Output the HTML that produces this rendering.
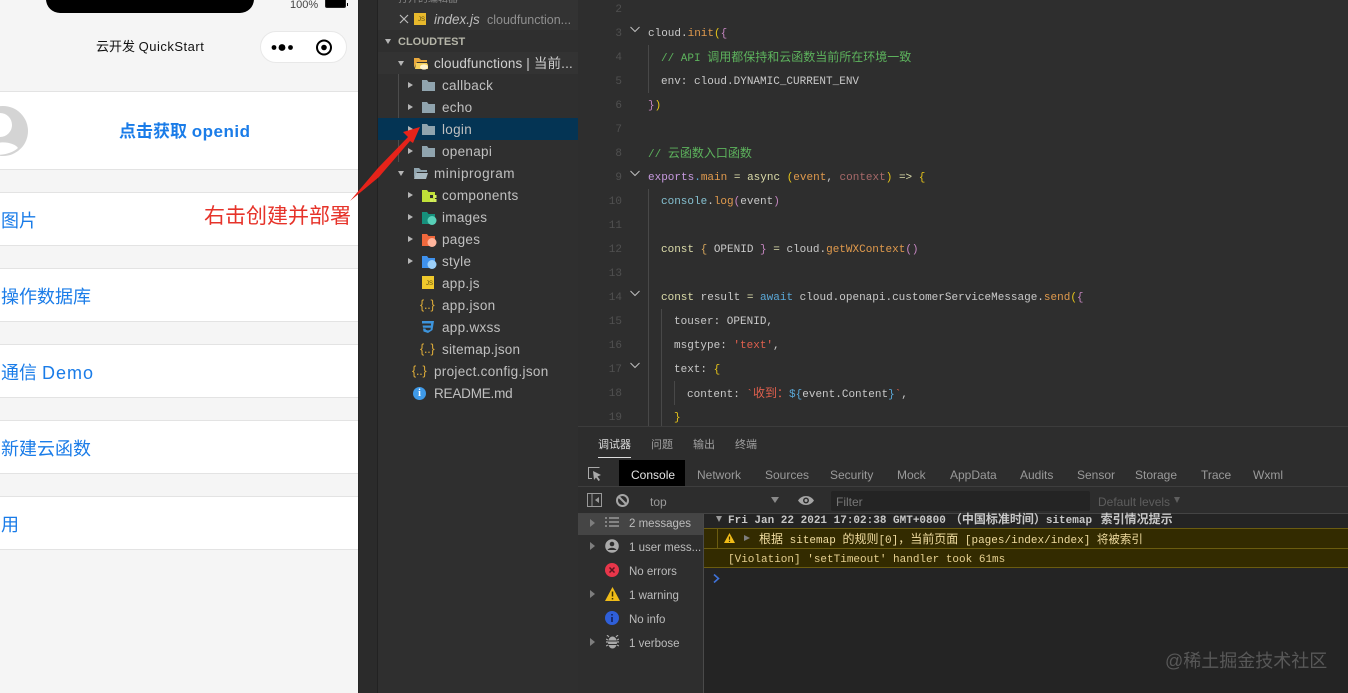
<!DOCTYPE html>
<html lang="zh"><head><meta charset="utf-8"><title>QuickStart</title>
<style>
*{box-sizing:border-box}
html,body{margin:0;padding:0;width:1348px;height:693px;overflow:hidden;background:#2d2d2d}
body{position:relative;font-family:"Liberation Sans","Noto Sans CJK SC",sans-serif}
.a,.t,.c,.ln,.row{position:absolute;white-space:pre}
.row{left:0;width:358px;background:#fff;border-top:1px solid #e3e3e3;border-bottom:1px solid #e3e3e3}
.l{position:absolute;left:1px;font-size:18px;line-height:24px;color:#1a7ce8;white-space:pre;transform:translateY(1px)}
.t{font-size:13.5px;line-height:18px;color:#c0c0c0;letter-spacing:.3px;transform:translateY(1px)}
.c{font-family:"Liberation Mono","Noto Sans CJK SC",monospace;font-size:11px;line-height:16px;color:#c9c9c9;transform:translateY(1px)}
.z{font-size:12px}
.ln{font-family:"Liberation Mono",monospace;font-size:11px;line-height:16px;color:#505050;text-align:right;width:20px;left:602px;transform:translateY(1px)}
.fold{position:absolute;left:630px}
.g{position:absolute;width:1px;background:#484848}
.tab{position:absolute;top:467px;font-size:12px;line-height:16px;color:#9a9a9a;white-space:pre}
.m{position:absolute;left:629px;font-size:11.5px;line-height:16px;color:#bcbcbc;white-space:pre;transform:translateY(1px)}
.con{position:absolute;font-family:"Liberation Mono","Noto Sans CJK SC",monospace;font-size:11px;line-height:16px;white-space:pre;transform:translateY(1px)}
.tri{position:absolute;width:0;height:0;border-left:5px solid #b5b5b5;border-top:3.5px solid transparent;border-bottom:3.5px solid transparent}
.tri.d{border-left:3.5px solid transparent;border-right:3.5px solid transparent;border-top:5px solid #b5b5b5;border-bottom:0}
.tri.s{border-left-color:#7e7e7e}
.j{position:absolute;font-size:12.5px;line-height:16px;color:#e0ae3a;letter-spacing:-.2px}
.k{color:#dcdcaa}.p{color:#d5a55c}.f{color:#e09a4d}.y{color:#e6c419}.v{color:#c586c0}.cm{color:#5db35d}.s1{color:#e0604e}.r{color:#a86a6a}.b{color:#5aa8d8}.w{color:#85c0d0}
</style></head><body>

<!-- phone simulator -->
<div class="a" style="left:0;top:0;width:358px;height:693px;background:#f5f5f5"></div>
<div class="a" style="left:46px;top:-10px;width:208px;height:23px;background:#000;border-radius:0 0 14px 14px"></div>
<div class="a" style="left:290px;top:-2px;font-size:11px;line-height:14px;color:#444">100%</div>
<div class="a" style="left:325px;top:0;width:21px;height:8px;background:#000;border:1px solid #222;border-top:0;border-radius:0 0 2px 2px"></div>
<div class="a" style="left:347px;top:3px;width:1px;height:3px;background:#000"></div>
<div class="a" style="left:96px;top:38px;font-size:13px;line-height:18px;color:#111">云开发 <span style="letter-spacing:.5px">QuickStart</span></div>
<div class="a" style="left:260px;top:31px;width:87px;height:32px;background:#fff;border:1px solid #e8e8e8;border-radius:16px"></div>
<svg class="a" style="left:270px;top:36px" width="70" height="22"><circle cx="4" cy="11.500" r="2.400" fill="#000"/><circle cx="12" cy="11.500" r="3.400" fill="#000"/><circle cx="20.500" cy="11.500" r="2.400" fill="#000"/><circle cx="54" cy="11.500" r="7" fill="none" stroke="#000" stroke-width="2"/><circle cx="54" cy="11.500" r="2.800" fill="#000"/></svg>

<div class="row" style="top:91px;height:79px"></div>
<svg class="a" style="left:0;top:105px" width="30" height="52"><circle cx="3" cy="26" r="25" fill="#d4d4d4"/><circle cx="0" cy="20" r="12" fill="#fff"/><path d="M-14 47C-10 35 12 35 18 43C10 50-4 52-14 47Z" fill="#fff"/></svg>
<div class="a" style="left:119px;top:120px;font-size:17px;line-height:24px;font-weight:bold;color:#1a7ce8">点击获取 <span style="letter-spacing:.5px">openid</span></div>

<div class="row" style="top:192px;height:54px"><div class="l" style="top:15px">图片</div></div>
<div class="row" style="top:268px;height:54px"><div class="l" style="top:15px">操作数据库</div></div>
<div class="row" style="top:344px;height:54px"><div class="l" style="top:15px">通信 <span style="letter-spacing:1px">Demo</span></div></div>
<div class="row" style="top:420px;height:54px"><div class="l" style="top:15px">新建云函数</div></div>
<div class="row" style="top:496px;height:54px"><div class="l" style="top:15px">用</div></div>

<div class="a" style="left:204px;top:204px;font-size:21px;line-height:26px;color:#e6332a">右击创建并部署</div>

<!-- sidebar -->
<div class="a" style="left:358px;top:0;width:20px;height:693px;background:#2b2b2b;border-left:1px solid #262626;border-right:1px solid #222"></div>
<div class="a" style="left:378px;top:0;width:200px;height:693px;background:#2f2f2f"></div>
<div class="a" style="left:378px;top:0;width:200px;height:30px;background:#333"></div>
<div class="a" style="left:398px;top:-7px;font-size:10px;line-height:14px;color:#888">打开的编辑器</div>
<svg class="a" style="left:399px;top:14px" width="10" height="10"><path d="M1 1L9 9M9 1L1 9" stroke="#bbb" stroke-width="1.2"/></svg>
<div class="a" style="left:414px;top:13px;width:12px;height:12px;background:#e8b92c;color:#5a4a10;font-size:6px;line-height:15px;text-align:right;padding-right:1px">JS</div>
<div class="t" style="left:434px;top:10px;font-size:13.5px;font-style:italic;color:#bdbdbd;letter-spacing:0">index.js</div>
<div class="t" style="left:487px;top:10px;font-size:12.5px;color:#8f8f8f;letter-spacing:0">cloudfunction...</div>

<div class="tri d" style="left:385px;top:39px"></div>
<div class="t" style="left:398px;top:32px;font-size:11px;font-weight:bold;color:#b5b5a8;letter-spacing:0">CLOUDTEST</div>

<div class="a" style="left:378px;top:52px;width:200px;height:22px;background:#333"></div>
<div class="tri d" style="left:398px;top:61px"></div>
<svg class="a" style="left:413px;top:56px" width="16" height="14"><path d="M1 2h5l2 2h6v2H4L1 12Z" fill="#e8a83c"/><path d="M3 7h11l1 2v4H2Z" fill="#f5cf5c"/><ellipse cx="11" cy="11" rx="4" ry="2.600" fill="#fff2cc"/></svg>
<div class="t" style="left:434px;top:54px;color:#cfcfcf;letter-spacing:.15px">cloudfunctions | 当前...</div>
<div class="a" style="left:398px;top:74px;width:1px;height:88px;background:#4c4c4c"></div>

<div class="a" style="left:378px;top:118px;width:200px;height:22px;background:#043454"></div>

<div class="tri" style="left:408px;top:82px"></div>
<svg class="a" style="left:421px;top:79px" width="15" height="13"><path d="M1 1h5l1.500 2H14v9H1Z" fill="#90a4ae"/></svg>
<div class="t" style="left:442px;top:76px">callback</div>
<div class="tri" style="left:408px;top:104px"></div>
<svg class="a" style="left:421px;top:101px" width="15" height="13"><path d="M1 1h5l1.500 2H14v9H1Z" fill="#90a4ae"/></svg>
<div class="t" style="left:442px;top:98px">echo</div>
<div class="tri" style="left:408px;top:126px"></div>
<svg class="a" style="left:421px;top:123px" width="15" height="13"><path d="M1 1h5l1.500 2H14v9H1Z" fill="#90a4ae"/></svg>
<div class="t" style="left:442px;top:120px">login</div>
<div class="tri" style="left:408px;top:148px"></div>
<svg class="a" style="left:421px;top:145px" width="15" height="13"><path d="M1 1h5l1.500 2H14v9H1Z" fill="#90a4ae"/></svg>
<div class="t" style="left:442px;top:142px">openapi</div>

<div class="tri d" style="left:398px;top:171px"></div>
<svg class="a" style="left:413px;top:167px" width="16" height="13"><path d="M1 1h5l2 2h6v2H4L1 11Z" fill="#90a4ae"/><path d="M3 6h12l-2 6H1Z" fill="#a9bac2"/></svg>
<div class="t" style="left:434px;top:164px;letter-spacing:.55px">miniprogram</div>
<div class="tri" style="left:408px;top:192px"></div>
<svg class="a" style="left:421px;top:189px" width="16" height="14"><path d="M1 1h5l1.500 2H14v10H1Z" fill="#c0e038"/><rect x="9" y="6" width="3" height="3" fill="#2f2f2f"/><rect x="12.500" y="6" width="3" height="3" fill="#d4ee5c"/><rect x="9" y="10" width="3" height="3" fill="#d4ee5c"/><rect x="12.500" y="10" width="3" height="3" fill="#d4ee5c"/></svg>
<div class="t" style="left:442px;top:186px">components</div>
<div class="tri" style="left:408px;top:214px"></div>
<svg class="a" style="left:421px;top:211px" width="16" height="14"><path d="M1 1h5l1.500 2H14v10H1Z" fill="#16907c"/><circle cx="11" cy="9.500" r="4.500" fill="#58d0b8"/></svg>
<div class="t" style="left:442px;top:208px">images</div>
<div class="tri" style="left:408px;top:236px"></div>
<svg class="a" style="left:421px;top:233px" width="16" height="14"><path d="M1 1h5l1.500 2H14v10H1Z" fill="#f0683c"/><circle cx="11" cy="9.500" r="4.500" fill="#ffb49c"/></svg>
<div class="t" style="left:442px;top:230px">pages</div>
<div class="tri" style="left:408px;top:258px"></div>
<svg class="a" style="left:421px;top:255px" width="16" height="14"><path d="M1 1h5l1.500 2H14v10H1Z" fill="#3f92ee"/><circle cx="11" cy="9.500" r="4.500" fill="#9cd0fa"/></svg>
<div class="t" style="left:442px;top:252px">style</div>

<div class="a" style="left:422px;top:276px;width:12px;height:13px;background:#f0c92c;color:#5a4a10;font-size:6px;line-height:17px;text-align:right;padding-right:1px">JS</div>
<div class="t" style="left:442px;top:274px">app.js</div>
<div class="j" style="left:420px;top:297px">{..}</div>
<div class="t" style="left:442px;top:296px">app.json</div>
<svg class="a" style="left:421px;top:320px" width="14" height="14"><path d="M1 1h12l-1.500 9L7 13 2.500 11.500 2 8.500h2.500l.3 1.200 2.200.8 2.500-.8.300-2H2L1.600 5.500h8.300l.2-2H1Z" fill="#3d94dc"/></svg>
<div class="t" style="left:442px;top:318px">app.wxss</div>
<div class="j" style="left:420px;top:341px">{..}</div>
<div class="t" style="left:442px;top:340px;letter-spacing:.2px">sitemap.json</div>
<div class="j" style="left:412px;top:363px">{..}</div>
<div class="t" style="left:434px;top:362px">project.config.json</div>
<div class="a" style="left:413px;top:387px;width:13px;height:13px;border-radius:50%;background:#3f9ae8;color:#fff;font-size:10px;line-height:13px;font-weight:bold;text-align:center;font-family:'Liberation Serif',serif">i</div>
<div class="t" style="left:434px;top:384px;letter-spacing:-.2px">README.md</div>

<!-- red arrow -->
<svg class="a" style="left:340px;top:120px" width="90" height="90"><path d="M80 7L63 12 68 17 38 48 10 81 39 57 70 21 73 23Z" fill="#e6231a"/></svg>

<!-- editor -->
<div class="a" style="left:578px;top:0;width:770px;height:426px;background:#2e2e2e"></div>
<div class="ln" style="top:1px">2</div>
<div class="ln" style="top:25px">3</div>
<div class="ln" style="top:49px">4</div>
<div class="ln" style="top:73px">5</div>
<div class="ln" style="top:97px">6</div>
<div class="ln" style="top:121px">7</div>
<div class="ln" style="top:145px">8</div>
<div class="ln" style="top:169px">9</div>
<div class="ln" style="top:193px">10</div>
<div class="ln" style="top:217px">11</div>
<div class="ln" style="top:241px">12</div>
<div class="ln" style="top:265px">13</div>
<div class="ln" style="top:289px">14</div>
<div class="ln" style="top:313px">15</div>
<div class="ln" style="top:337px">16</div>
<div class="ln" style="top:361px">17</div>
<div class="ln" style="top:385px">18</div>
<div class="ln" style="top:409px">19</div>

<svg class="fold" style="top:26px" width="10" height="7"><path d="M.5 1L5 5.500 9.500 1" stroke="#bdbdbd" fill="none"/></svg>
<svg class="fold" style="top:170px" width="10" height="7"><path d="M.5 1L5 5.500 9.500 1" stroke="#bdbdbd" fill="none"/></svg>
<svg class="fold" style="top:290px" width="10" height="7"><path d="M.5 1L5 5.500 9.500 1" stroke="#bdbdbd" fill="none"/></svg>
<svg class="fold" style="top:362px" width="10" height="7"><path d="M.5 1L5 5.500 9.500 1" stroke="#bdbdbd" fill="none"/></svg>

<div class="g" style="left:648px;top:45px;height:48px"></div>
<div class="g" style="left:648px;top:189px;height:237px"></div>
<div class="g" style="left:661px;top:309px;height:117px"></div>
<div class="g" style="left:674px;top:381px;height:24px"></div>

<div class="c" style="left:648px;top:25px">cloud.<span class="f">init</span><span class="y">(</span><span class="v">{</span></div>
<div class="c" style="left:661px;top:49px;color:#5db35d">// API <span class="z">调用都保持和云函数当前所在环境一致</span></div>
<div class="c" style="left:661px;top:73px">env: cloud.DYNAMIC_CURRENT_ENV</div>
<div class="c" style="left:648px;top:97px"><span class="v">}</span><span class="y">)</span></div>
<div class="c" style="left:648px;top:145px;color:#5db35d">// <span class="z">云函数入口函数</span></div>
<div class="c" style="left:648px;top:169px"><span style="color:#c79adf">exports</span><span class="b">.</span><span class="f">main</span> <span class="k">=</span> <span class="k">async</span> <span class="y">(</span><span class="f">event</span>, <span class="r">context</span><span class="y">)</span> <span class="k">=&gt;</span> <span class="y">{</span></div>
<div class="c" style="left:661px;top:193px"><span class="w">console</span>.<span class="f">log</span><span class="v">(</span>event<span class="v">)</span></div>
<div class="c" style="left:661px;top:241px"><span class="k">const</span> <span class="p">{</span> OPENID <span class="v">}</span> <span class="k">=</span> cloud.<span class="f">getWXContext</span><span class="v">()</span></div>
<div class="c" style="left:661px;top:289px"><span class="k">const</span> result <span class="k">=</span> <span class="b">await</span> cloud.openapi.customerServiceMessage.<span class="f">send</span><span class="y">(</span><span class="v">{</span></div>
<div class="c" style="left:674px;top:313px">touser: OPENID,</div>
<div class="c" style="left:674px;top:337px">msgtype: <span class="s1">'text'</span>,</div>
<div class="c" style="left:674px;top:361px">text: <span class="y">{</span></div>
<div class="c" style="left:687px;top:385px">content: <span class="s1">`<span class="z">收到：</span></span><span class="b">${</span>event.Content<span class="b">}</span><span class="s1">`</span>,</div>
<div class="c" style="left:674px;top:409px"><span class="y">}</span></div>

<!-- bottom panel -->
<div class="a" style="left:578px;top:426px;width:770px;height:267px;background:#2d2d2d;border-top:1px solid #3c3c3c"></div>
<div class="a" style="left:598px;top:437px;font-size:11px;line-height:16px;color:#dcdcdc">调试器</div>
<div class="a" style="left:598px;top:457px;width:33px;height:1px;background:#ddd"></div>
<div class="a" style="left:651px;top:437px;font-size:11px;line-height:16px;color:#a0a0a0">问题</div>
<div class="a" style="left:693px;top:437px;font-size:11px;line-height:16px;color:#a0a0a0">输出</div>
<div class="a" style="left:735px;top:437px;font-size:11px;line-height:16px;color:#a0a0a0">终端</div>

<div class="a" style="left:578px;top:486px;width:770px;height:1px;background:#3e3e3e"></div>
<svg class="a" style="left:587px;top:466px" width="16" height="16"><path d="M12.500 1.500H1.500V12.500H5" stroke="#aaa" fill="none"/><path d="M6 5L14 9 10.500 10.500 13 14 11.500 15 9 11.500 7 14Z" fill="#aaa"/></svg>
<div class="a" style="left:619px;top:460px;width:66px;height:26px;background:#000"></div>
<div class="tab" style="left:631px;color:#e4e4e4">Console</div>
<div class="tab" style="left:697px">Network</div>
<div class="tab" style="left:765px">Sources</div>
<div class="tab" style="left:830px">Security</div>
<div class="tab" style="left:897px">Mock</div>
<div class="tab" style="left:950px">AppData</div>
<div class="tab" style="left:1020px">Audits</div>
<div class="tab" style="left:1077px">Sensor</div>
<div class="tab" style="left:1135px">Storage</div>
<div class="tab" style="left:1201px">Trace</div>
<div class="tab" style="left:1253px">Wxml</div>

<svg class="a" style="left:587px;top:493px" width="16" height="15"><rect x=".5" y=".5" width="14" height="13" fill="none" stroke="#999"/><path d="M5 .5V13.500" stroke="#999"/><path d="M12 4V10L8 7Z" fill="#999"/></svg>
<svg class="a" style="left:615px;top:493px" width="15" height="15"><circle cx="7.500" cy="7.500" r="5.500" fill="none" stroke="#a5a5a5" stroke-width="2"/><path d="M3.500 3.500L11.500 11.500" stroke="#a5a5a5" stroke-width="2"/></svg>
<div class="a" style="left:650px;top:494px;font-size:12px;line-height:16px;color:#9a9a9a">top</div>
<div class="tri d" style="left:771px;top:497px;border-left-width:4px;border-right-width:4px;border-top-width:6px;border-top-color:#8a8a8a"></div>
<svg class="a" style="left:797px;top:494px" width="18" height="13"><path d="M1 6.500C5 .5 13 .5 17 6.500 13 12.500 5 12.500 1 6.500Z" fill="#a5a5a5"/><circle cx="9" cy="6.500" r="3" fill="#2d2d2d"/><circle cx="9" cy="6.500" r="1.500" fill="#a5a5a5"/></svg>
<div class="a" style="left:831px;top:491px;width:259px;height:20px;background:#242424;border-radius:2px"></div>
<div class="a" style="left:836px;top:494px;font-size:12px;line-height:16px;color:#777">Filter</div>
<div class="a" style="left:1098px;top:494px;font-size:12px;line-height:16px;color:#5e5e5e">Default levels</div>
<div class="tri d" style="left:1174px;top:497px;border-left-width:3.500px;border-right-width:3.500px;border-top-width:6px;border-top-color:#5e5e5e"></div>

<div class="a" style="left:578px;top:513px;width:770px;height:1px;background:#444"></div>
<!-- console sidebar -->
<div class="a" style="left:578px;top:514px;width:126px;height:179px;background:#2e2e2e;border-right:1px solid #4a4a4a"></div>
<div class="a" style="left:578px;top:514px;width:125px;height:21px;background:#454545"></div>
<div class="tri s" style="left:590px;top:519px;border-left-width:5px;border-top-width:4px;border-bottom-width:4px"></div>
<svg class="a" style="left:605px;top:516px" width="15" height="12"><path d="M0 2h2M4 2h10M0 6h2M4 6h10M0 10h2M4 10h10" stroke="#999" stroke-width="1.500"/></svg>
<div class="m" style="top:515px">2 messages</div>
<div class="tri s" style="left:590px;top:542px;border-top-width:4px;border-bottom-width:4px"></div>
<svg class="a" style="left:605px;top:539px" width="14" height="14"><circle cx="7" cy="7" r="6.800" fill="#aaa"/><circle cx="7" cy="5" r="2.300" fill="#2e2e2e"/><path d="M2.500 11C4 8 10 8 11.500 11Z" fill="#2e2e2e"/></svg>
<div class="m" style="top:539px">1 user mess...</div>
<svg class="a" style="left:605px;top:563px" width="14" height="14"><circle cx="7" cy="7" r="7" fill="#e8364a"/><path d="M4.500 4.500L9.500 9.500M9.500 4.500L4.500 9.500" stroke="#5a1520" stroke-width="1.500"/></svg>
<div class="m" style="top:563px">No errors</div>
<div class="tri s" style="left:590px;top:590px;border-top-width:4px;border-bottom-width:4px"></div>
<svg class="a" style="left:605px;top:587px" width="15" height="14"><path d="M7.500 0L15 14H0Z" fill="#f0bc18"/><path d="M7.500 4.500V9.500M7.500 11V12.500" stroke="#3a3000" stroke-width="1.500"/></svg>
<div class="m" style="top:587px">1 warning</div>
<svg class="a" style="left:605px;top:611px" width="14" height="14"><circle cx="7" cy="7" r="7" fill="#2f5fd8"/><path d="M7 3V4.500M7 6V11" stroke="#10205a" stroke-width="1.600"/></svg>
<div class="m" style="top:611px">No info</div>
<div class="tri s" style="left:590px;top:638px;border-top-width:4px;border-bottom-width:4px"></div>
<svg class="a" style="left:606px;top:635px" width="13" height="14"><path d="M3 2L1 0M10 2L12 0M0 7H13M0 4L2 5M13 4L11 5M0 11L2 10M13 11L11 10" stroke="#aaa" stroke-width="1.200"/><ellipse cx="6.500" cy="7.500" rx="4.500" ry="6" fill="#aaa"/><path d="M2 6H11M2 9.500H11" stroke="#2e2e2e"/></svg>
<div class="m" style="top:635px">1 verbose</div>

<!-- console body -->
<div class="a" style="left:704px;top:514px;width:644px;height:179px;background:#242424"></div>
<div class="con" style="left:728px;top:511px;font-weight:bold;color:#c8c8c8">Fri Jan 22 2021 17:02:38 GMT+0800<span class="z" style="margin-left:4px">（中国标准时间）</span>sitemap <span class="z" style="margin-left:2px">索引情况提示</span></div>
<div class="a" style="left:704px;top:528px;width:644px;height:40px;background:#332b00"></div>
<div class="a" style="left:704px;top:528px;width:644px;height:1px;background:#6b5c10"></div>
<div class="a" style="left:704px;top:548px;width:644px;height:1px;background:#6b5c10"></div>
<div class="a" style="left:704px;top:567px;width:644px;height:1px;background:#6b5c10"></div>
<div class="a" style="left:717px;top:528px;width:1px;height:20px;background:#6b5c10"></div>
<div class="tri d" style="left:716px;top:516px;border-left-width:3.500px;border-right-width:3.500px;border-top-width:6px;border-top-color:#999"></div>
<svg class="a" style="left:724px;top:533px" width="11" height="10"><path d="M5.500 0L11 10H0Z" fill="#f0bc18"/><path d="M5.500 3.500V6.800M5.500 7.800V9" stroke="#3a3000" stroke-width="1.200"/></svg>
<div class="tri s" style="left:744px;top:535px;border-left-width:6px;border-top-width:3.500px;border-bottom-width:3.500px"></div>
<div class="con" style="left:759px;top:531px;color:#f0dca0"><span class="z">根据</span> sitemap <span class="z">的规则</span>[0]<span class="z">，当前页面</span> [pages/index/index] <span style="font-size:11.5px">将被索引</span></div>
<div class="con" style="left:728px;top:551px;color:#e6d090">[Violation] 'setTimeout' handler took 61ms</div>
<svg class="a" style="left:713px;top:574px" width="7" height="9"><path d="M1 .5L5.500 4.500 1 8.500" fill="none" stroke="#3f72d8" stroke-width="1.600"/></svg>

<div class="a" style="left:1165px;top:649px;font-size:18px;line-height:24px;color:#585858">@稀土掘金技术社区</div>

</body></html>
